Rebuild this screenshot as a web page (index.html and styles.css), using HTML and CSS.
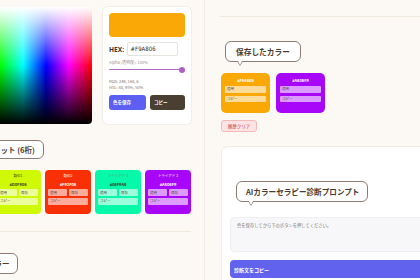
FILE: index.html
```html
<!DOCTYPE html>
<html lang="ja">
<head>
<meta charset="utf-8">
<title>Color Tool</title>
<link rel="stylesheet" href="styles.css">
</head>
<body>
<div class="page">
  <section class="left">
    <div class="picker-row">
      <div class="spectrum"></div>
      <div class="picker-card">
        <div class="swatch"></div>
        <div class="hex-row"><span class="hex-label">HEX:</span><span class="hex-input">#F9A806</span></div>
        <div class="alpha-label">Alpha (透明度): 100%</div>
        <div class="slider"><span class="thumb"></span></div>
        <div class="info">RGB: 249, 168, 6<br>HSL: 40, 95%, 50%</div>
        <div class="btn-row">
          <button class="btn btn-save">色を保存</button>
          <button class="btn btn-copy">コピー</button>
        </div>
      </div>
    </div>

    <h2 class="bubble bubble-palette">カラーパレット (6桁)</h2>

    <div class="palette">
      <div class="pcard dark-text" style="background:#D0F906">
        <div class="pcard-label">類似1</div>
        <div class="pcard-hex">#D0F906</div>
        <div class="pcard-btns"><span class="mini">適用</span><span class="mini">保存</span></div>
        <span class="mini wide">コピー</span>
      </div>
      <div class="pcard" style="background:#F92F06">
        <div class="pcard-label">類似2</div>
        <div class="pcard-hex">#F92F06</div>
        <div class="pcard-btns"><span class="mini">適用</span><span class="mini">保存</span></div>
        <span class="mini wide">コピー</span>
      </div>
      <div class="pcard dark-text soft-label" style="background:#06F9A8">
        <div class="pcard-label">トライアド 1</div>
        <div class="pcard-hex">#06F9A8</div>
        <div class="pcard-btns"><span class="mini">適用</span><span class="mini">保存</span></div>
        <span class="mini wide">コピー</span>
      </div>
      <div class="pcard" style="background:#A806F9">
        <div class="pcard-label">トライアド 2</div>
        <div class="pcard-hex">#A806F9</div>
        <div class="pcard-btns"><span class="mini">適用</span><span class="mini">保存</span></div>
        <span class="mini wide">コピー</span>
      </div>
    </div>

    <hr class="sep">

    <h2 class="bubble bubble-bottom">おすすめカラー</h2>
  </section>

  <section class="right">
    <hr class="sep sep-top">

    <h2 class="bubble bubble-saved">保存したカラー</h2>

    <div class="saved">
      <div class="scard dark-text" style="background:#F9A806">
        <div class="scard-hex">#F9A806</div>
        <span class="mini wide">適用</span>
        <span class="mini wide">コピー</span>
      </div>
      <div class="scard" style="background:#A806F9">
        <div class="scard-hex">#A806F9</div>
        <span class="mini wide">適用</span>
        <span class="mini wide">コピー</span>
      </div>
    </div>

    <button class="clear-btn">履歴クリア</button>

    <div class="ai-card">
      <h2 class="bubble bubble-ai">AIカラーセラピー診断プロンプト</h2>
      <div class="prompt-box">色を保存してから下のボタンを押してください。</div>
      <button class="prompt-btn">診断文をコピー</button>
    </div>
  </section>
</div>
</body>
</html>
```

FILE: styles.css
```css
* { box-sizing: border-box; }

html, body {
  margin: 0;
  padding: 0;
  background: #fcf8f4;
  overflow: hidden;
  width: 420px;
  height: 280px;
}

body {
  font-family: "Noto Sans CJK JP", "Noto Sans", sans-serif;
  color: #4b3a30;
}

.page {
  display: flex;
  align-items: flex-start;
}

/* ---------- left column ---------- */
.left {
  flex: none;
  width: 247px;
  margin-left: -54px;
  padding: 7px 2px 0 8px;
}

.picker-row {
  display: flex;
  gap: 11px;
  height: 117px;
}

.spectrum {
  flex: none;
  width: 138px;
  border-radius: 4px;
  background:
    linear-gradient(to bottom, #fff 0%, rgba(255,255,255,0) 50%, rgba(0,0,0,0) 50%, #000 100%),
    linear-gradient(to right, #f00 0%, #ff0 16.67%, #0f0 33.33%, #0ff 50%, #00f 66.67%, #f0f 83.33%, #f00 100%);
}

.picker-card {
  flex: 1;
  background: #fff;
  border-radius: 5px;
  padding: 6px;
  box-shadow: 0 0 0 1px #f3eee8;
}

.swatch {
  height: 24px;
  border-radius: 4px;
  background: #F9A806;
}

.hex-row {
  display: flex;
  align-items: center;
  gap: 2.5px;
  margin-top: 5px;
}

.hex-label {
  font-family: "Noto Sans", sans-serif;
  font-weight: 700;
  font-size: 6.6px;
  color: #3a3330;
}

.hex-input {
  width: 51px;
  height: 14px;
  border: 1px solid #e6e2de;
  border-radius: 2px;
  padding-left: 3px;
  font-family: "DejaVu Sans Condensed", "Liberation Sans Narrow", sans-serif;
  font-size: 6px;
  line-height: 12px;
  color: #2f2a28;
}

.alpha-label {
  margin-top: 4px;
  font-size: 4px;
  line-height: 5px;
  color: #9a918b;
}

.slider {
  position: relative;
  margin-top: 1.5px;
  height: 6px;
  margin-right: 3px;
}

.slider::before {
  content: "";
  display: block;
  position: absolute;
  left: 0;
  right: 0;
  top: 2.3px;
  height: 1.4px;
  background: #b46bc9;
  border-radius: 1px;
}

.thumb {
  position: absolute;
  right: -3px;
  top: 0;
  width: 6px;
  height: 6px;
  border-radius: 50%;
  background: #b05fc7;
}

.info {
  margin-top: 5px;
  font-size: 4px;
  line-height: 6.5px;
  color: #7d746e;
}

.btn-row {
  display: flex;
  gap: 4px;
  margin-top: 4px;
}

.btn {
  height: 15px;
  border: none;
  border-radius: 3px;
  padding: 0 0 0 4px;
  text-align: left;
  font-family: "Noto Sans CJK JP", sans-serif;
  font-weight: 700;
  font-size: 4.5px;
  color: #fff;
}

.btn-save { width: 37px; background: #5c5ff0; }
.btn-copy { flex: 1; background: #4a3f33; }

/* ---------- bubbles ---------- */
.bubble {
  position: relative;
  display: block;
  width: max-content;
  margin: 0;
  background: #fff;
  border: 1px solid #8c7d74;
  border-radius: 6px;
  font-weight: 700;
  font-size: 7.5px;
  line-height: 9px;
  color: #4b3a30;
  padding: 5px 10px;
}

.bubble::before,
.bubble::after {
  content: "";
  position: absolute;
  left: 11px;
  width: 0;
  height: 0;
  border-style: solid;
}

.bubble::before {
  bottom: -5px;
  border-width: 5px 3.5px 0 3.5px;
  border-color: #8c7d74 transparent transparent transparent;
}

.bubble::after {
  bottom: -3.6px;
  left: 12px;
  border-width: 4px 2.5px 0 2.5px;
  border-color: #fff transparent transparent transparent;
}

.bubble-palette {
  margin-top: 16px;
  padding: 4px 8px;
}

.bubble-bottom {
  margin-top: 21px;
  padding-left: 2px;
  padding-right: 7px;
}

/* ---------- palette cards ---------- */
.palette {
  display: flex;
  justify-content: flex-end;
  gap: 4px;
  margin-top: 11px;
}

.pcard {
  flex: none;
  width: 46px;
  height: 44px;
  border-radius: 4px;
  padding: 3px;
  color: #fff;
}

.pcard-label {
  text-align: center;
  font-size: 3.5px;
  line-height: 6px;
}

.pcard-hex {
  text-align: center;
  font-weight: 700;
  font-size: 4px;
  line-height: 6px;
  margin-top: 2px;
}

.dark-text { color: #3d3a2a; }
.soft-label .pcard-label { color: #6a8f80; }

.pcard-btns {
  display: flex;
  gap: 2px;
  margin-top: 2px;
}

.mini {
  display: block;
  flex: 1;
  height: 7px;
  padding-left: 2px;
  border-radius: 1px;
  background: rgba(255, 255, 255, 0.6);
  font-size: 3.5px;
  line-height: 7px;
  font-weight: 400;
  color: #55504a;
}

.pcard .wide {
  margin-top: 2px;
  height: 6.5px;
  line-height: 6.5px;
}

.sep {
  border: none;
  border-top: 1px solid #efe8df;
  margin: 17px 0 0 0;
}

/* ---------- right column ---------- */
.right {
  flex: none;
  width: 260px;
  margin-left: 11px;
  padding: 16px 0 0 16px;
  border-left: 1px solid #f3ede6;
  min-height: 280px;
}

.right .sep-top {
  margin: 0 0 0 -1px;
}

.bubble-saved {
  margin-top: 24px;
  margin-left: 4px;
  font-size: 7.7px;
}

.saved {
  display: flex;
  gap: 6px;
  margin-top: 11px;
}

.scard {
  width: 49px;
  height: 40px;
  border-radius: 5px;
  padding: 4px;
  color: #fff;
}

.scard-hex {
  text-align: center;
  font-weight: 700;
  font-size: 4px;
  line-height: 7px;
}

.scard .wide {
  margin-top: 2px;
  height: 6.5px;
  line-height: 6.5px;
}

.scard .wide + .wide { margin-top: 3px; }

.clear-btn {
  display: block;
  margin-top: 7px;
  width: 36px;
  height: 12px;
  padding: 0;
  border: 1px solid #f6b9b9;
  border-radius: 3px;
  background: #fde3e3;
  font-family: "Noto Sans CJK JP", sans-serif;
  font-size: 4.5px;
  color: #c0463c;
}

.ai-card {
  margin-top: 14px;
  background: #fff;
  border: 1px solid #f1ebe4;
  border-radius: 7px;
  padding: 34px 0 0 8px;
  height: 160px;
}

.bubble-ai {
  margin-left: 6px;
  padding-left: 9px;
  padding-right: 8px;
  font-size: 7.6px;
}

.prompt-box {
  margin-top: 15px;
  height: 35px;
  background: #f7f7f9;
  border: 1px solid #efeff2;
  border-radius: 4px;
  padding: 4px 6px;
  font-size: 4.3px;
  line-height: 6px;
  color: #7c7773;
}

.prompt-btn {
  display: block;
  width: 100%;
  margin-top: 8px;
  height: 18px;
  border: none;
  border-radius: 4px;
  background: #6163ee;
  color: #fff;
  text-align: left;
  padding: 0 0 0 4px;
  font-family: "Noto Sans CJK JP", sans-serif;
  font-weight: 700;
  font-size: 5px;
}
```
